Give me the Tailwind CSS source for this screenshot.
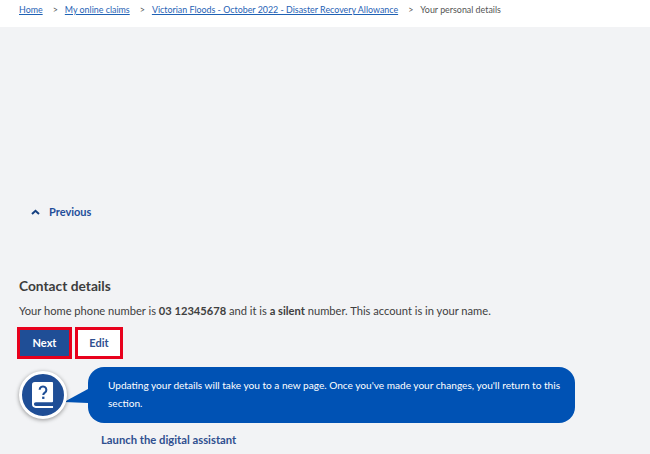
<!DOCTYPE html>
<html lang="en">
<head>
    <meta charset="UTF-8">
    <title>Your personal details</title>
    <script src="https://cdn.jsdelivr.net/npm/@tailwindcss/browser@4"></script>
</head>
<body class="bg-[#f2f3f5] font-['Lato',sans-serif] h-[454px] overflow-hidden">
    <!-- Breadcrumb -->
    <nav class="bg-white h-[27px] pl-[19px] pt-[3px] flex items-start text-[8.9px] leading-[14px] text-[#555]">
        <a href="#" class="text-[#1f62b5] underline">Home</a>
        <span class="ml-[10px] mr-[7px]">&gt;</span>
        <a href="#" class="text-[#1f62b5] underline">My online claims</a>
        <span class="ml-[10px] mr-[7px]">&gt;</span>
        <a href="#" class="text-[#1f62b5] underline">Victorian Floods - October 2022 - Disaster Recovery Allowance</a>
        <span class="ml-[10px] mr-[7px]">&gt;</span>
        <span>Your personal details</span>
    </nav>

    <main class="pl-[19px]">
        <!-- Previous -->
        <a href="#" class="mt-[177px] ml-[12px] flex items-center h-[16px] text-[11px] font-bold text-[#1f4e9a]">
            <svg class="w-[9px] h-[6px] mr-[9px]" viewBox="0 0 9 6"><path d="M1 5 L4.5 1.8 L8 5" fill="none" stroke="#143f80" stroke-width="2"/></svg>
            Previous
        </a>

        <h2 class="mt-[56px] text-[13.75px] leading-[20px] font-bold text-[#3d3d3d]">Contact details</h2>
        <p class="mt-[6px] text-[11.15px] leading-[17px] text-[#404040]">Your home phone number is <b>03 12345678</b> and it is <b>a silent</b> number. This account is in your name.</p>

        <!-- Buttons -->
        <div class="mt-[8px] -ml-[2px] flex gap-[3px]">
            <button class="w-[55px] h-[32px] bg-[#1f4e96] border-[3px] border-[#e8001c] text-white text-[11px] font-bold">Next</button>
            <button class="w-[48px] h-[32px] bg-white border-[3px] border-[#e8001c] text-[#2f4f8f] text-[11px] font-bold">Edit</button>
        </div>

        <!-- Assistant bubble -->
        <div class="mt-[8px] flex items-center relative">
            <div class="w-[48px] h-[48px] rounded-full bg-[#1f4e96] border-[3px] border-white shadow-[0_1px_4px_rgba(0,0,0,0.4)] flex items-center justify-center shrink-0 z-10">
                <svg class="w-[22px] h-[29px]" viewBox="0 0 23 28">
                    <path d="M3 0 H21 a1 1 0 0 1 1 1 V20 a1 1 0 0 1 -1 1 H4 a2 2 0 0 0 0 4 H22 V27 H4 a4 4 0 0 1 -4 -4 V3 a3 3 0 0 1 3 -3 Z" fill="#fff"/>
                    <path d="M8 8 a3.5 3.5 0 1 1 5.4 3 c-1.2 .8 -1.6 1.3 -1.6 2.6" fill="none" stroke="#1f4e96" stroke-width="2.2"/>
                    <rect x="10.6" y="15.2" width="2.4" height="2.4" fill="#1f4e96"/>
                </svg>
            </div>
            <svg class="w-[24px] h-[14px] shrink-0 -ml-[3px] mt-[2px]" viewBox="0 0 24 14"><path d="M0 13 L24 0 V14 Z" fill="#0052b4"/></svg>
            <div class="w-[487px] h-[56px] rounded-[16px] bg-[#0052b4] text-white text-[10.1px] leading-[18px] pl-[20px] pr-[4px] pt-[9px]">Updating your details will take you to a new page. Once you've made your changes, you'll return to this section.</div>
        </div>

        <a href="#" class="block mt-[9px] ml-[82px] text-[11.25px] leading-[16px] font-bold text-[#2f4f8f]">Launch the digital assistant</a>
    </main>
</body>
</html>
